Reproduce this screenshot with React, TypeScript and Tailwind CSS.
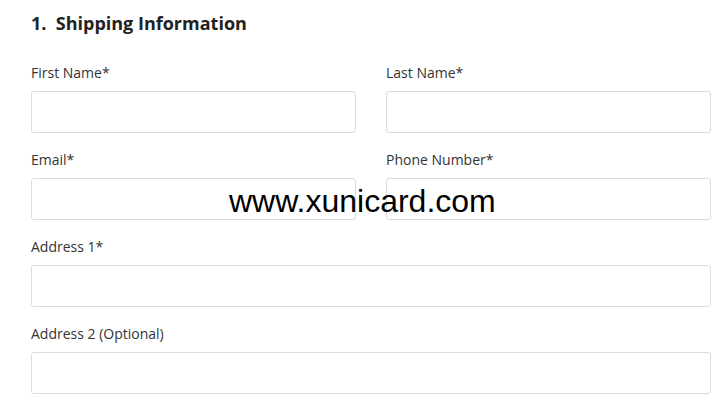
import React from "react";

function Field({ label }: { label: string }) {
  return (
    <div className="flex flex-col">
      <label className="text-[14px] leading-[20px] text-[#333333] h-[20px]">{label}</label>
      <input className="mt-[8px] h-[42px] w-full rounded-[3px] border border-[#dcdcdc] bg-white outline-none" />
    </div>
  );
}

export default function App() {
  return (
    <div
      className="relative w-[725px] h-[402px] bg-white overflow-hidden"
      style={{ fontFamily: '"Open Sans", sans-serif' }}
    >
      <div className="ml-[31px] w-[680px] pt-[11px]">
        <h2 className="text-[18px] leading-[24px] font-bold text-[#222222]">1.&nbsp; Shipping Information</h2>
        <div className="mt-[28px] grid grid-cols-2 gap-x-[30px] gap-y-[17px]">
          <Field label="First Name*" />
          <Field label="Last Name*" />
          <Field label="Email*" />
          <Field label="Phone Number*" />
          <div className="col-span-2">
            <Field label="Address 1*" />
          </div>
          <div className="col-span-2">
            <Field label="Address 2 (Optional)" />
          </div>
        </div>
      </div>
      <div
        className="absolute left-[229px] top-[181px] text-[32px] leading-[40px] text-black"
        style={{ fontFamily: '"Liberation Sans", Arial, sans-serif' }}
      >
        www.xunicard.com
      </div>
    </div>
  );
}
